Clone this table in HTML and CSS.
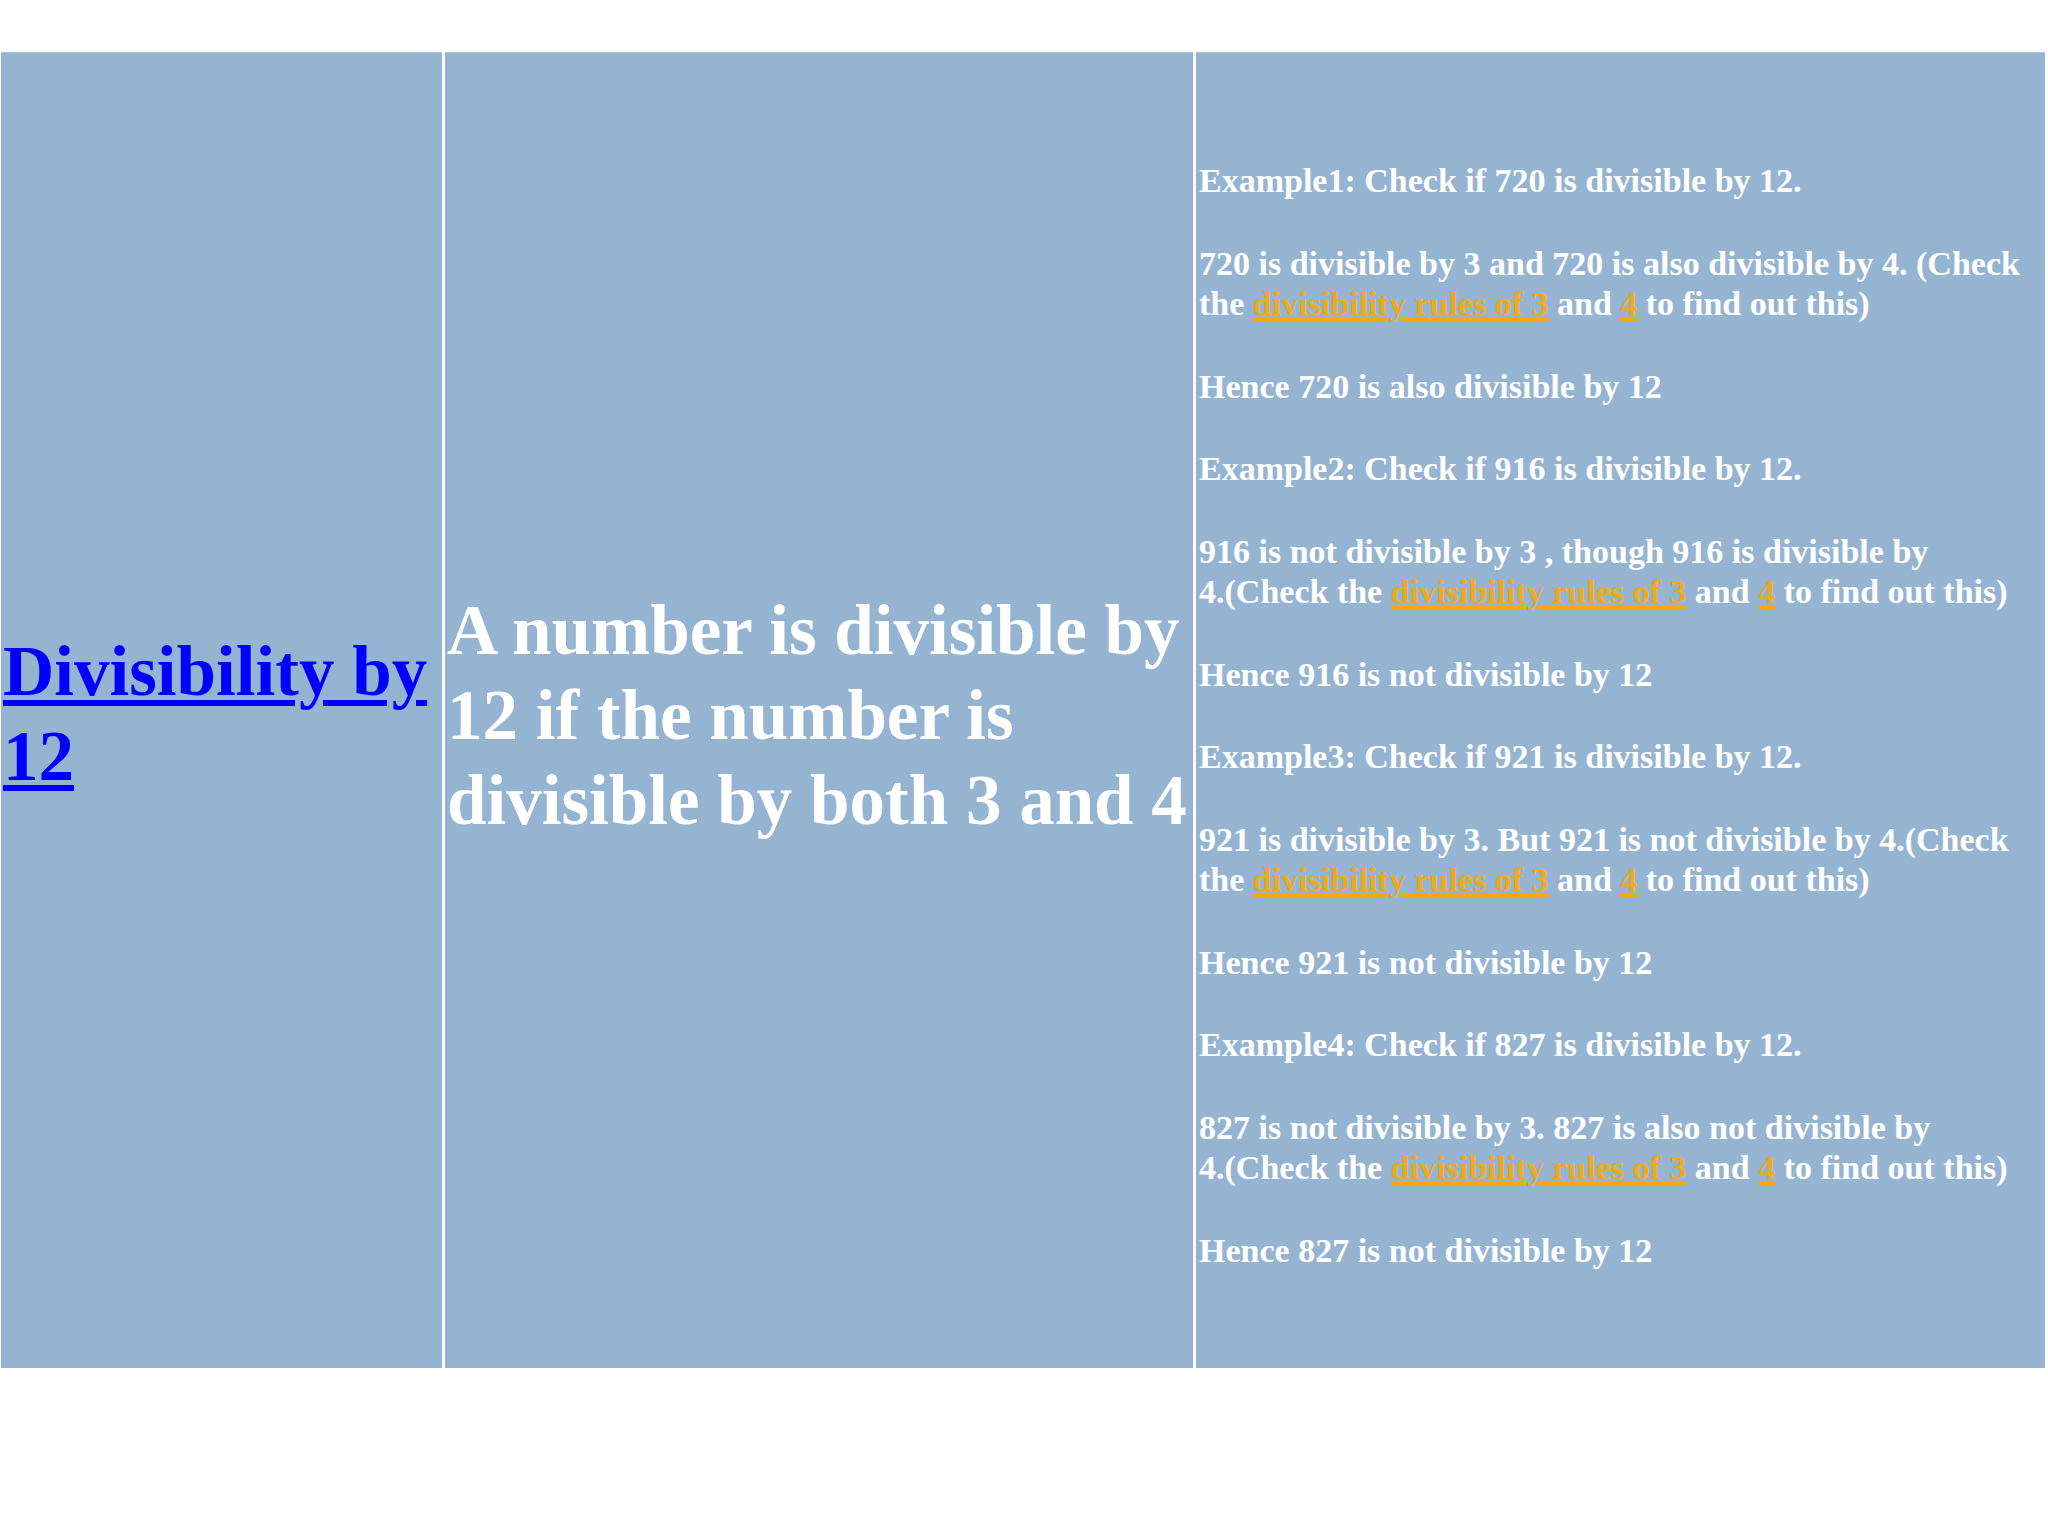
FILE: index.html
```html
<!DOCTYPE html>
<html>
<head>
<meta charset="utf-8">
<title>Divisibility by 12</title>
<link rel="stylesheet" href="styles.css">
</head>
<body>
<div class="table">
  <div class="cell cell-title">
    <a class="title-link" href="#">Divisibility by 12</a>
  </div>
  <div class="cell cell-rule">
    <p class="rule">A number is divisible by 12 if the number is divisible by both 3 and 4</p>
  </div>
  <div class="cell cell-examples">
    <div class="examples">
      <p>Example1: Check if 720 is divisible by 12.</p>
      <p>720 is divisible by 3 and 720 is also divisible by 4. (Check the <a href="#">divisibility rules of 3</a> and <a href="#">4</a> to find out this)</p>
      <p>Hence 720 is also divisible by 12</p>
      <p>Example2: Check if 916 is divisible by 12.</p>
      <p>916 is not divisible by 3 , though 916 is divisible by <span class="nobr">4.(Check</span> the <a href="#">divisibility rules of 3</a> and <a href="#">4</a> to find out this)</p>
      <p>Hence 916 is not divisible by 12</p>
      <p>Example3: Check if 921 is divisible by 12.</p>
      <p>921 is divisible by 3. But 921 is not divisible by <span class="nobr">4.(Check</span> the <a href="#">divisibility rules of 3</a> and <a href="#">4</a> to find out this)</p>
      <p>Hence 921 is not divisible by 12</p>
      <p>Example4: Check if 827 is divisible by 12.</p>
      <p>827 is not divisible by 3. 827 is also not divisible by <span class="nobr">4.(Check</span> the <a href="#">divisibility rules of 3</a> and <a href="#">4</a> to find out this)</p>
      <p>Hence 827 is not divisible by 12</p>
    </div>
  </div>
</div>
</body>
</html>
```
FILE: styles.css
```css
html, body {
  margin: 0;
  padding: 0;
  background: #ffffff;
}

body {
  font-family: "Liberation Serif", "Times New Roman", serif;
  font-weight: bold;
  color: #ffffff;
}

.table {
  display: grid;
  grid-template-columns: 441px 748px 849px;
  column-gap: 3px;
  height: 1316px;
  margin: 52px 0 0 1px;
}

.cell {
  background: #95b4d2;
  display: flex;
  align-items: center;
  box-shadow: inset 0 1px 0 #a9c3dc;
}

.cell-title {
  padding: 8px 2px 0 2px;
}

.title-link {
  color: #0000ff;
  font-size: 71px;
  line-height: 85px;
  text-decoration: underline;
  text-decoration-thickness: 6px;
  text-underline-offset: 5px;
}

.cell-rule {
  padding: 0 2px;
}

.rule {
  margin: 0;
  font-size: 71px;
  line-height: 85px;
  position: relative;
  top: 5px;
}

.cell-examples {
  padding: 12px 3px 0 3px;
}

.examples p {
  margin: 0 0 42px 0;
  font-size: 34px;
  line-height: 40.5px;
}

.examples p:last-child {
  margin-bottom: 0;
}

.nobr {
  white-space: nowrap;
}

.examples a {
  color: #eeaa1c;
  text-decoration: underline;
  text-decoration-thickness: 3px;
  text-underline-offset: 3px;
}
```
